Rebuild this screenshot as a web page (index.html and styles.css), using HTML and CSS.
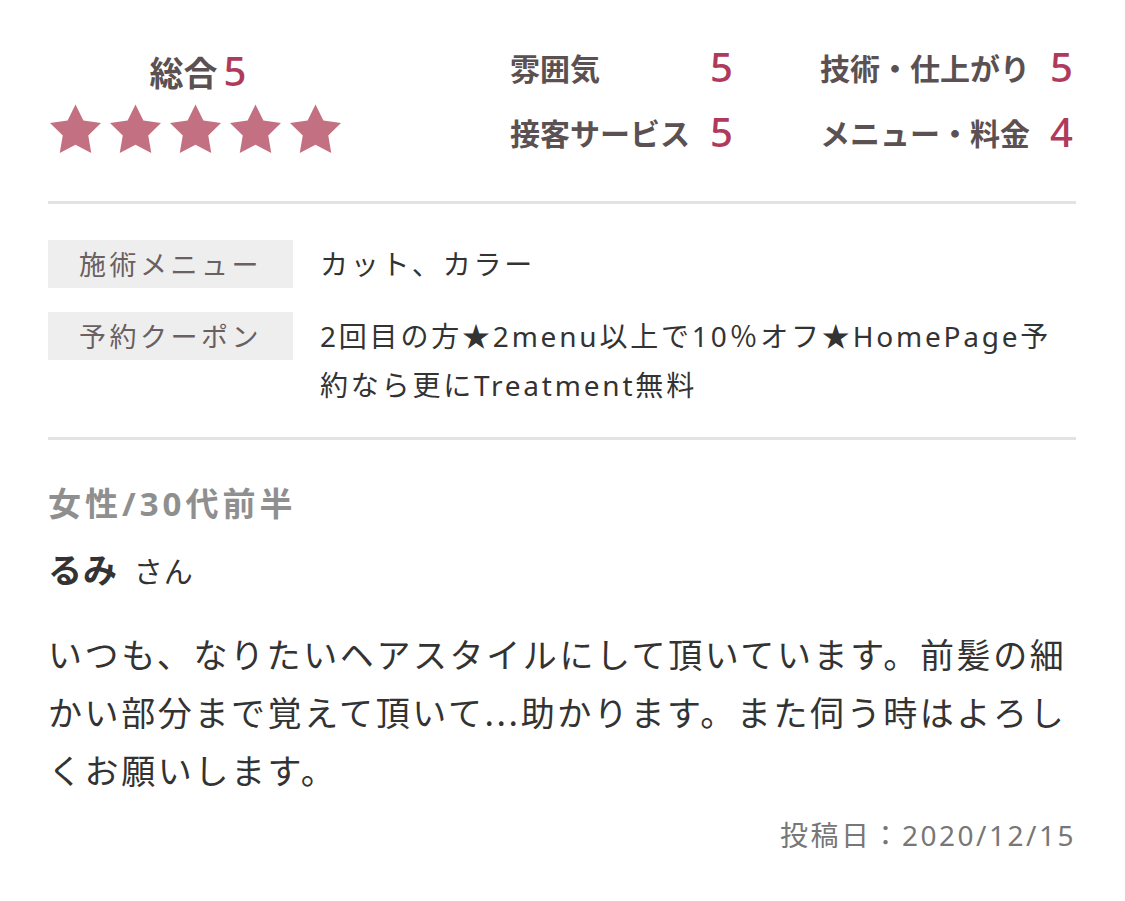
FILE: index.html
```html
<!DOCTYPE html>
<html lang="ja">
<head>
<meta charset="utf-8">
<title>口コミ</title>
<link rel="stylesheet" href="styles.css">
</head>
<body>
<div class="review">
  <section class="summary">
    <div class="overall">
      <div class="overall-title">総合<span class="num">5</span></div>
      <div class="stars">
        <svg class="star" viewBox="2 2 20 19.2"><path d="M12 2l3.09 6.26L22 9.27l-5 4.87 1.18 6.88L12 17.77l-6.18 3.25L7 14.14 2 9.27l6.91-1.01L12 2z"/></svg>
        <svg class="star" viewBox="2 2 20 19.2"><path d="M12 2l3.09 6.26L22 9.27l-5 4.87 1.18 6.88L12 17.77l-6.18 3.25L7 14.14 2 9.27l6.91-1.01L12 2z"/></svg>
        <svg class="star" viewBox="2 2 20 19.2"><path d="M12 2l3.09 6.26L22 9.27l-5 4.87 1.18 6.88L12 17.77l-6.18 3.25L7 14.14 2 9.27l6.91-1.01L12 2z"/></svg>
        <svg class="star" viewBox="2 2 20 19.2"><path d="M12 2l3.09 6.26L22 9.27l-5 4.87 1.18 6.88L12 17.77l-6.18 3.25L7 14.14 2 9.27l6.91-1.01L12 2z"/></svg>
        <svg class="star" viewBox="2 2 20 19.2"><path d="M12 2l3.09 6.26L22 9.27l-5 4.87 1.18 6.88L12 17.77l-6.18 3.25L7 14.14 2 9.27l6.91-1.01L12 2z"/></svg>
      </div>
    </div>
    <div class="scores">
      <span class="label">雰囲気</span><span class="num">5</span>
      <span class="label">技術・仕上がり</span><span class="num">5</span>
      <span class="label">接客サービス</span><span class="num">5</span>
      <span class="label">メニュー・料金</span><span class="num">4</span>
    </div>
  </section>

  <section class="details">
    <div class="row">
      <div class="tag">施術メニュー</div>
      <div class="value">カット、カラー</div>
    </div>
    <div class="row">
      <div class="tag">予約クーポン</div>
      <div class="value">2回目の方★2menu以上で10％オフ★HomePage予約なら更にTreatment無料</div>
    </div>
  </section>

  <section class="body">
    <div class="profile">女性/30代前半</div>
    <div class="name"><strong>るみ</strong> <span class="san">さん</span></div>
    <p class="text">いつも、なりたいヘアスタイルにして頂いています。前髪の細かい部分まで覚えて頂いて...助かります。また伺う時はよろしくお願いします。</p>
    <div class="date">投稿日：2020/12/15</div>
  </section>
</div>
</body>
</html>
```

FILE: styles.css
```css
* { box-sizing: border-box; }
html, body { margin: 0; padding: 0; background: #fff; }
body {
  font-family: "Noto Sans CJK JP", "Noto Sans", sans-serif;
  color: #333;
}
.review {
  width: 1125px;
  padding: 40px 49px 0 48px;
}
.summary {
  display: flex;
  align-items: flex-start;
  padding-bottom: 42px;
  border-bottom: 3px solid #e3e3e3;
}
.overall {
  width: 300px;
  margin-top: 11px;
  text-align: center;
}
.overall-title {
  font-size: 34px;
  line-height: 40px;
  font-weight: 700;
  color: #5b5052;
}
.overall-title .num { margin-left: 6px; }
.num {
  font-family: "Noto Sans", "Liberation Sans", sans-serif;
  font-size: 40px;
  font-weight: 500;
  color: #b03a5c;
}
.stars {
  display: flex;
  justify-content: center;
  gap: 9px;
  margin-top: 12px;
  padding-right: 5px;
}
.star {
  display: block;
  width: 51px;
  height: 50px;
  fill: #c37082;
}
.scores {
  margin-left: 162px;
  display: grid;
  grid-template-columns: 200px 110px 230px auto;
  grid-auto-rows: 54px;
  row-gap: 11px;
  align-items: center;
}
.scores .label {
  font-size: 30px;
  font-weight: 700;
  color: #5b5052;
  line-height: 54px;
}
.scores .num { line-height: 54px; }

.details {
  padding: 36px 0 27px;
  border-bottom: 3px solid #e3e3e3;
  display: flex;
  flex-direction: column;
  gap: 23px;
}
.row {
  display: grid;
  grid-template-columns: 245px 1fr;
  column-gap: 27px;
  align-items: start;
}
.tag {
  background: #eeeeee;
  height: 48px;
  line-height: 48px;
  text-align: center;
  font-size: 27px;
  letter-spacing: 3.5px;
  color: #6a5f61;
}
.value {
  font-family: "Noto Sans", "Noto Sans CJK JP", sans-serif;
  font-size: 28px;
  line-height: 49px;
  letter-spacing: 2.8px;
  color: #333;
}

.body { padding-top: 44px; }
.profile {
  font-family: "Noto Sans", "Noto Sans CJK JP", sans-serif;
  font-size: 33px;
  line-height: 40px;
  font-weight: 700;
  color: #8f8f8f;
  letter-spacing: 4px;
}
.name {
  margin-top: 25px;
  font-size: 34px;
  line-height: 40px;
  color: #333;
}
.name strong { font-weight: 700; letter-spacing: 1px; }
.name .san { font-size: 29px; margin-left: 8px; letter-spacing: 1px; }
.text {
  margin: 35px 0 0;
  font-size: 34px;
  line-height: 58px;
  letter-spacing: 2.6px;
  color: #333;
}
.date {
  font-family: "Noto Sans", "Noto Sans CJK JP", sans-serif;
  margin-top: 16px;
  text-align: right;
  font-size: 28px;
  line-height: 40px;
  color: #777;
  letter-spacing: 2.5px;
}
```
